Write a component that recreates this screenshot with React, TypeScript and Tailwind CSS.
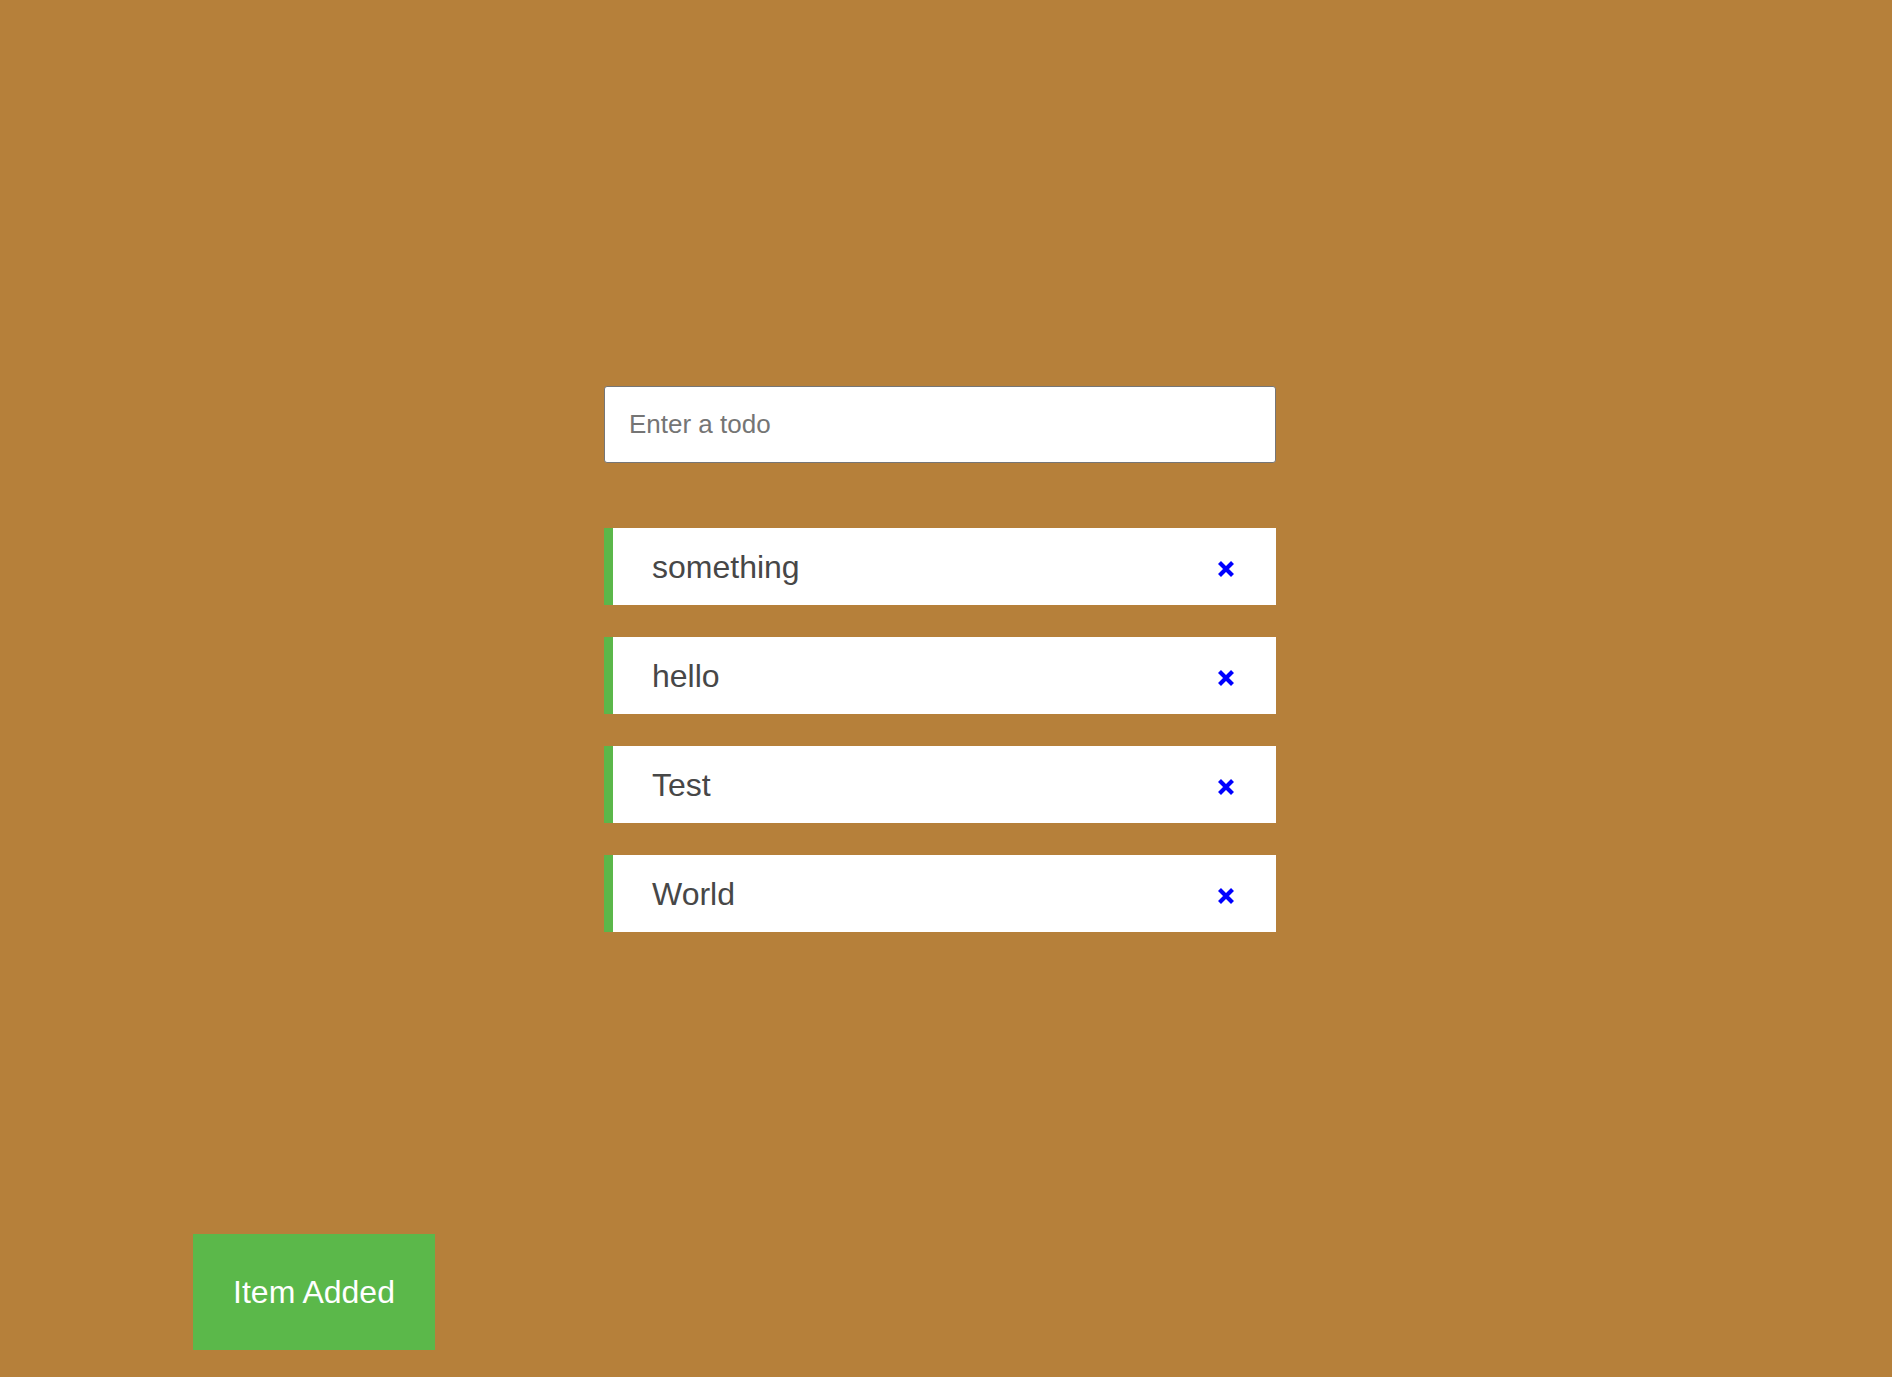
import React from "react";

const todos = ["something", "hello", "Test", "World"];

const App: React.FC = () => {
  return (
    <div className="relative min-h-[1377px] w-full bg-[#b6803a] font-['Liberation_Sans',Arial,sans-serif]">
      <div className="flex flex-col items-center pt-[386px] pr-[12px]">
        <div className="w-[672px]">
          <input
            type="text"
            autoFocus
            placeholder="Enter a todo"
            className="h-[77px] w-full rounded-[3px] border border-[#767676] bg-white px-[24px] text-[26px] text-[#333] caret-black placeholder:text-[#757575] outline-none"
          />
          <ul className="mt-[65px] flex flex-col gap-[32px]">
            {todos.map((todo) => (
              <li
                key={todo}
                className="flex h-[77px] items-center justify-between border-l-[9px] border-[#5bb74a] bg-white pl-[39px] pr-[40px]"
              >
                <span className="text-[32px] text-[#474747]">{todo}</span>
                <button className="mt-[5px] flex h-[20px] w-[20px] items-center justify-center">
                  <svg width="18" height="18" viewBox="0 0 18 18">
                    <path d="M2.5 2.5 L15.5 15.5 M15.5 2.5 L2.5 15.5" stroke="#0000ff" strokeWidth="4.2" strokeLinecap="butt" />
                  </svg>
                </button>
              </li>
            ))}
          </ul>
        </div>
      </div>
      <div className="absolute bottom-[27px] left-[193px] flex h-[116px] w-[242px] items-center justify-center bg-[#5bb84a] text-[32px] text-white">
        Item Added
      </div>
    </div>
  );
};

export default App;
